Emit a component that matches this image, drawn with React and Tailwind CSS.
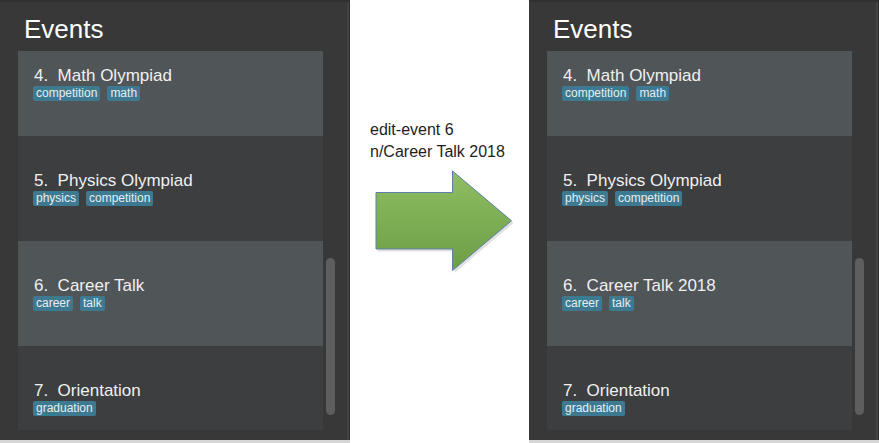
import React from "react";

const cards = [
  { n: "4.", name: "Math Olympiad", tags: ["competition", "math"], light: true },
  { n: "5.", name: "Physics Olympiad", tags: ["physics", "competition"], light: false },
  { n: "6.", name: "Career Talk", tags: ["career", "talk"], light: true },
  { n: "7.", name: "Orientation", tags: ["graduation"], light: false },
];

function Panel({ items }) {
  return (
    <div className="w-[350px] h-[443px] flex flex-row bg-[#383838] border-t-2 border-t-[#303030] border-b-[3px] border-b-[#d6d6d6] shrink-0">
      <div className="flex-1 flex flex-col pt-[12px]">
        <div className="pl-[24px] h-[30px] leading-[30px] text-[26px] text-white font-['Liberation_Sans',sans-serif]">
          Events
        </div>
        <div className="mt-[7px] pl-[18px] flex flex-row">
          <div className="w-[305px] h-[379px] overflow-hidden">
            <div className="-mt-[20px] flex flex-col">
              {items.map((c) => (
                <div
                  key={c.n}
                  className={
                    "h-[105px] flex flex-col justify-center pl-[15px] " +
                    (c.light ? "bg-[#505558]" : "bg-[#3c3e40]")
                  }
                >
                  <div className="h-[20px] leading-[20px] text-[17px] text-[#f0f0f0] font-['Liberation_Sans',sans-serif] pl-[1px] whitespace-pre">
                    {c.n + "  " + c.name}
                  </div>
                  <div className="flex flex-row gap-[7px]">
                    {c.tags.map((t) => (
                      <span
                        key={t}
                        className="h-[15px] leading-[15px] px-[3px] rounded-[2px] bg-[#3d7a91] text-[12px] text-[#e6eef2] font-['Liberation_Sans',sans-serif]"
                      >
                        {t}
                      </span>
                    ))}
                  </div>
                </div>
              ))}
            </div>
          </div>
          <div className="ml-[3px] w-[9px] flex flex-col">
            <div className="mt-[207px] h-[157px] rounded-[5px] bg-[#5e5e5e]" />
          </div>
        </div>
      </div>
      <div className="w-[2px] bg-[#434343]" />
      <div className="w-[1px] bg-[#2c2c2c]" />
    </div>
  );
}

export default function App() {
  const after = cards.map((c) => (c.n === "6." ? { ...c, name: "Career Talk 2018" } : c));
  return (
    <div className="w-[879px] h-[443px] bg-white flex flex-row overflow-hidden">
      <Panel items={cards} />
      <div className="w-[179px] flex flex-col pl-[20px] pt-[119px]">
        <div className="text-[16px] leading-[21.6px] text-[#1e1e1e] font-['Liberation_Sans',sans-serif] whitespace-nowrap">
          <div>edit-event 6</div>
          <div>n/Career Talk 2018</div>
        </div>
        <svg className="ml-[5px] mt-[8px]" width="142" height="106" viewBox="0 0 142 106">
          <defs>
            <linearGradient id="g" x1="0" y1="0" x2="0" y2="1">
              <stop offset="0" stopColor="#8fbd63" />
              <stop offset="1" stopColor="#6c9e45" />
            </linearGradient>
          </defs>
          <polygon
            points="3,25 79.5,25 79.5,3.5 138.5,53 79.5,103 79.5,81.5 3,81.5"
            fill="#000"
            opacity="0.12"
          />
          <polygon
            points="1,22.5 77.5,22.5 77.5,1 136.5,50.75 77.5,100.5 77.5,79 1,79"
            fill="url(#g)"
            stroke="#5e80a8"
            strokeWidth="1"
          />
        </svg>
      </div>
      <Panel items={after} />
    </div>
  );
}
